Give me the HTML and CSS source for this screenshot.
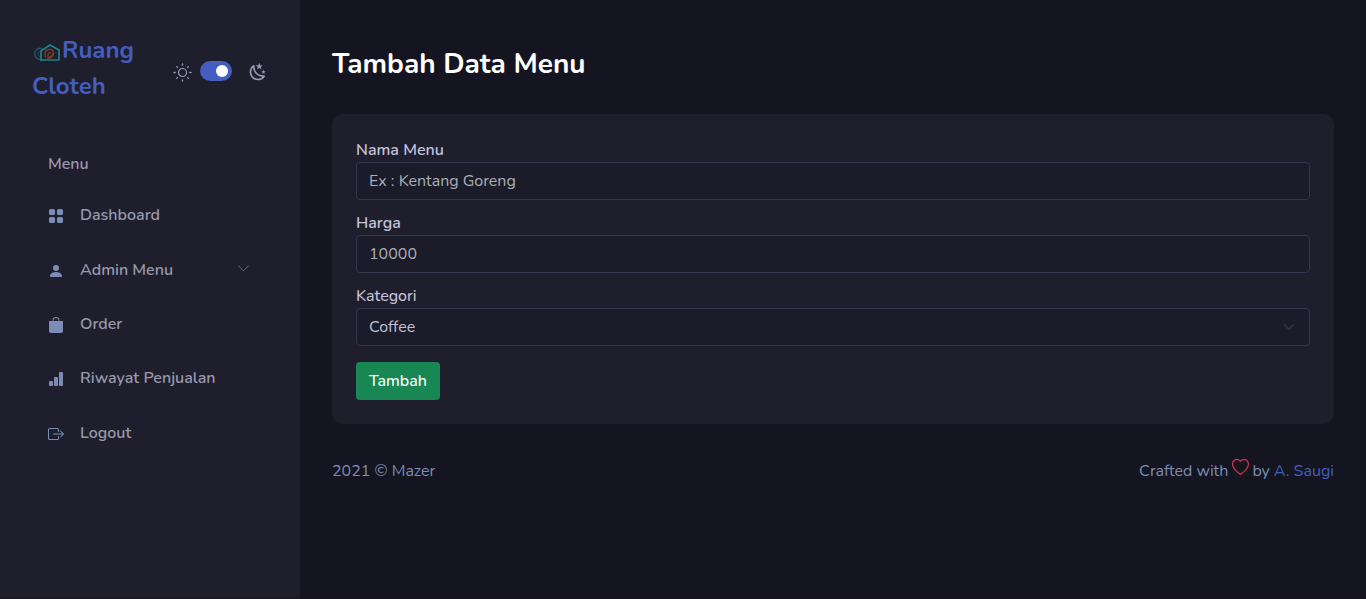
FILE: index.html
```html
<!DOCTYPE html>
<html lang="id">
<head>
<meta charset="utf-8">
<title>Tambah Data Menu</title>
<link rel="stylesheet" href="styles.css">
</head>
<body>
<div class="app">
  <aside class="sidebar">
    <header class="sidebar-header">
      <a class="brand"><svg class="brand-logo" viewBox="0 0 30 22" fill="none"><path d="M10 7.500C6 6.500 2.500 9.500 2.500 13s4 6 9.500 6.200" stroke="#245561" stroke-width="1.400"/><path d="M9 16c-3-.5-4-3.500-1.500-6" stroke="#23414c" stroke-width="1.200"/><path d="M9 19V10L18 4l9 5v10z" stroke="#20808b" stroke-width="1.700"/><path d="M14 16.500c-2-3-1-7 2.500-8 4-.8 6 2.500 4 5.500-1.500 2.500-5 2.500-4.500 0 0-2 2-3 2.500-1.500M15 17.500c4 0 6-2 7-6" stroke="#713e26" stroke-width="1.500"/></svg><span>Ruang</span><br><span>Cloteh</span></a>
      <div class="theme">
        <svg class="sun" viewBox="0 0 21 21" fill="none" stroke="currentColor" stroke-linecap="round"><circle cx="10.500" cy="10.500" r="4" stroke-width="1.200"/><path d="M10.500 2v1.200M10.500 17.800V19M2 10.500h1.200M17.800 10.500H19M4.700 4.700l.7.7M15.600 15.600l.7.7M4.700 16.300l.7-.7M15.600 5.400l.7-.7" stroke-width="1.300"/></svg>
        <span class="switch"><span class="knob"></span></span>
        <svg class="moon" viewBox="0 0 24 24" fill="currentColor"><path d="M17.750 4.090l-2.530 1.940.91 3.060-2.630-1.810-2.630 1.810.91-3.060-2.530-1.940L12.440 4l1.060-3 1.060 3 3.190.09m3.500 6.910l-1.640 1.250.59 1.980-1.700-1.170-1.700 1.170.59-1.980L15.750 11l2.060-.05L18.500 9l.69 1.950 2.060.05m-2.280 4.950c.83-.08 1.720 1.100 1.190 1.850-.32.450-.66.870-1.080 1.270C15.170 23 8.840 23 4.940 19.070c-3.910-3.900-3.910-10.240 0-14.140.4-.4.820-.76 1.270-1.080.75-.53 1.930.36 1.850 1.190-.27 2.860.69 5.830 2.890 8.020a9.960 9.960 0 0 0 8.020 2.890m-1.640 2.020a12.080 12.080 0 0 1-7.800-3.470c-2.170-2.190-3.330-5-3.490-7.820-2.810 3.140-2.700 7.960.31 10.980 3.020 3.010 7.840 3.120 10.980.31z"/></svg>
      </div>
    </header>
    <nav class="menu">
      <div class="menu-title">Menu</div>
      <a class="item"><svg class="icon" viewBox="0 0 16 16"><path d="M1 2.500A1.500 1.500 0 0 1 2.500 1h3A1.500 1.500 0 0 1 7 2.500v3A1.500 1.500 0 0 1 5.500 7h-3A1.500 1.500 0 0 1 1 5.500zm8 0A1.500 1.500 0 0 1 10.500 1h3A1.500 1.500 0 0 1 15 2.500v3A1.500 1.500 0 0 1 13.500 7h-3A1.500 1.500 0 0 1 9 5.500zm-8 8A1.500 1.500 0 0 1 2.500 9h3A1.500 1.500 0 0 1 7 10.500v3A1.500 1.500 0 0 1 5.500 15h-3A1.500 1.500 0 0 1 1 13.500zm8 0A1.500 1.500 0 0 1 10.500 9h3a1.500 1.500 0 0 1 1.500 1.500v3a1.500 1.500 0 0 1-1.500 1.500h-3A1.500 1.500 0 0 1 9 13.500z"/></svg><span>Dashboard</span></a>
      <a class="item"><svg class="icon" viewBox="0 0 16 16"><path d="M3 14s-1 0-1-1 1-4 6-4 6 3 6 4-1 1-1 1zm5-6a3 3 0 1 0 0-6 3 3 0 0 0 0 6"/></svg><span>Admin Menu</span><svg class="chevron" viewBox="0 0 13 13" fill="none" stroke="currentColor"><path d="M1.200 3.500l5.300 5.300 5.300-5.300"/></svg></a>
      <a class="item"><svg class="icon" viewBox="0 0 16 16"><path d="M8 1a2.500 2.500 0 0 1 2.500 2.500V4h-5v-.5A2.500 2.500 0 0 1 8 1m3.500 3v-.5a3.500 3.500 0 1 0-7 0V4H1v10a2 2 0 0 0 2 2h10a2 2 0 0 0 2-2V4z"/></svg><span>Order</span></a>
      <a class="item"><svg class="icon" viewBox="0 0 16 16"><path d="M1 11a1 1 0 0 1 1-1h2a1 1 0 0 1 1 1v3a1 1 0 0 1-1 1H2a1 1 0 0 1-1-1zm5-4a1 1 0 0 1 1-1h2a1 1 0 0 1 1 1v7a1 1 0 0 1-1 1H7a1 1 0 0 1-1-1zm5-5a1 1 0 0 1 1-1h2a1 1 0 0 1 1 1v12a1 1 0 0 1-1 1h-2a1 1 0 0 1-1-1z"/></svg><span>Riwayat Penjualan</span></a>
      <a class="item"><svg class="icon" viewBox="0 0 16 16"><path fill-rule="evenodd" d="M10 12.500a.5.500 0 0 1-.5.500h-8a.5.500 0 0 1-.5-.5v-9a.5.500 0 0 1 .5-.5h8a.5.500 0 0 1 .5.500v2a.5.500 0 0 0 1 0v-2A1.500 1.500 0 0 0 9.500 2h-8A1.500 1.500 0 0 0 0 3.500v9A1.500 1.500 0 0 0 1.500 14h8a1.500 1.500 0 0 0 1.500-1.500v-2a.5.500 0 0 0-1 0z"/><path fill-rule="evenodd" d="M15.854 8.354a.5.500 0 0 0 0-.708l-3-3a.5.500 0 0 0-.708.708L14.293 7.500H5.500a.5.500 0 0 0 0 1h8.793l-2.147 2.146a.5.500 0 0 0 .708.708z"/></svg><span>Logout</span></a>
    </nav>
  </aside>
  <main class="main">
    <h1 class="title">Tambah Data Menu</h1>
    <form class="card">
      <div class="group"><label class="field-label">Nama Menu</label><div class="control placeholder"><span>Ex : Kentang Goreng</span></div></div>
      <div class="group"><label class="field-label">Harga</label><div class="control placeholder"><span>10000</span></div></div>
      <div class="group"><label class="field-label category">Kategori</label><div class="control"><span>Coffee</span><svg class="caret" viewBox="0 0 16 16" fill="none" stroke="#343a40" stroke-width="2" stroke-linecap="round" stroke-linejoin="round"><path d="M2 5l6 6 6-6"/></svg></div></div>
      <button type="button" class="submit">Tambah</button>
    </form>
    <footer class="footer">
      <span>2021 © Mazer</span>
      <span class="credit"><span>Crafted with</span><svg class="heart" viewBox="0 0 16 16" fill="#dc3545" stroke="#dc3545" stroke-width=".25"><path d="m8 2.748-.717-.737C5.600.281 2.514.878 1.400 3.053c-.523 1.023-.641 2.500.314 4.385.92 1.815 2.834 3.989 6.286 6.357 3.452-2.368 5.365-4.542 6.286-6.357.955-1.886.838-3.362.314-4.385C13.486.878 10.400.28 8.717 2.010zM8 15C-7.333 4.868 3.279-3.040 7.824 1.143q.09.083.176.171a3 3 0 0 1 .176-.17C12.720-3.042 23.333 4.867 8 15"/></svg><span>by</span><a class="author">A. Saugi</a></span>
    </footer>
  </main>
</div>
</body>
</html>
```
FILE: styles.css
```css
* { box-sizing: border-box; }
body { margin: 0; background: #151521; color: #c2c2d9; font: 16px/24px Nunito, Lato, sans-serif; overflow: hidden; }
svg { flex: none; }
.app { display: flex; height: 599px; border-bottom: 1px solid #1a1422; }
.sidebar { width: 300px; flex: none; background: #1e1e2d; }
.sidebar-header { display: flex; justify-content: space-between; height: 136px; padding: 32px 32px 0; }
.brand { color: #435ebe; font-size: 24px; font-weight: 700; line-height: 36px; white-space: nowrap; }
.brand-logo { width: 30px; height: 22px; vertical-align: -5px; }
.theme { display: flex; align-items: center; height: 80px; color: #9a9ab3; }
.sun { width: 21px; height: 21px; margin: 0 7.500px 0 0; }
.switch { display: flex; justify-content: flex-end; align-items: center; width: 32px; height: 20px; padding-right: 4px; margin: -2px 16px 0 0; border-radius: 10px; background: #435ebe; }
.knob { width: 12px; height: 12px; border-radius: 50%; background: #fff; }
.moon { width: 20px; height: 20px; }
.menu { padding: 0 32px; color: #9899ac; font-weight: 600; }
.menu-title { height: 24px; margin: 16px 16px 16px; }
.item { display: flex; align-items: center; height: 46.400px; margin-bottom: 8px; padding: 0 16px; }
.icon { width: 16px; height: 16px; margin: 2px 16px 0 0; fill: #7c8db5; }
.chevron { width: 13px; height: 13px; margin: -3px 2.500px 0 auto; color: #6b6b70; }
.main { flex: 1; padding: 45px 32px 0; }
.title { margin: 0 0 30px; color: #fff; font-size: 28px; line-height: 39px; font-weight: 700; }
.card { height: 310px; padding: 24px; border-radius: 11px; background: #1e1e2d; }
.group { margin-bottom: 11px; }
.group:nth-child(3) { margin-bottom: 16px; }
.field-label { display: block; height: 24px; font-weight: 600; }
.category { font-weight: 500; letter-spacing: -0.05px; }
.control { display: flex; align-items: center; justify-content: space-between; height: 38px; padding: 0 12px; border: 1px solid #35354f; border-radius: 4px; background: #1b1b29; }
.placeholder { color: #a9b0b6; }
.caret { width: 16px; height: 12px; }
.submit { display: block; width: 84px; height: 38px; padding: 0; border: 0; border-radius: 4px; background: #198754; color: #fff; font: inherit; font-weight: 500; }
.footer { display: flex; justify-content: space-between; margin-top: 35px; color: #7c8db5; }
.credit { display: flex; }
.heart { width: 17px; height: 17px; margin: 0 4px; }
.author { margin-left: 4px; color: #435ebe; }
.heart + span { margin-left: -1px; }
```
